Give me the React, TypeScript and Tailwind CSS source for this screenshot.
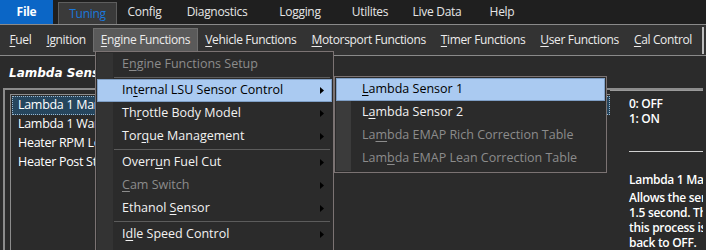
const tabs = [
  { label: "Config", w: "w-[55px]" },
  { label: "Diagnostics", w: "w-[90px]" },
  { label: "Logging", w: "w-[76px]" },
  { label: "Utilites", w: "w-[64px]" },
  { label: "Live Data", w: "w-[70px]" },
  { label: "Help", w: "w-[60px]" },
];

const toolItems = [
  { key: "F", rest: "uel" },
  { key: "I", rest: "gnition" },
  { key: "E", rest: "ngine Functions", active: true },
  { key: "V", rest: "ehicle Functions" },
  { key: "M", rest: "otorsport Functions" },
  { key: "T", rest: "imer Functions" },
  { key: "U", rest: "ser Functions" },
  { key: "C", rest: "al Control" },
];

type MenuItem =
  | { sep: true }
  | { pre: string; key: string; post: string; disabled?: boolean; arrow?: boolean; active?: boolean };

const engineMenu: MenuItem[] = [
  { pre: "E", key: "n", post: "gine Functions Setup", disabled: true },
  { sep: true },
  { pre: "In", key: "t", post: "ernal LSU Sensor Control", arrow: true, active: true },
  { pre: "Th", key: "r", post: "ottle Body Model", arrow: true },
  { pre: "Tor", key: "q", post: "ue Management", arrow: true },
  { sep: true },
  { pre: "Overr", key: "u", post: "n Fuel Cut", arrow: true },
  { pre: "", key: "C", post: "am Switch", disabled: true, arrow: true },
  { pre: "Ethanol ", key: "S", post: "ensor", arrow: true },
  { sep: true },
  { pre: "I", key: "d", post: "le Speed Control", arrow: true },
];

const lsuMenu: MenuItem[] = [
  { pre: "", key: "L", post: "ambda Sensor 1", active: true },
  { pre: "L", key: "a", post: "mbda Sensor 2" },
  { pre: "La", key: "m", post: "bda EMAP Rich Correction Table", disabled: true },
  { pre: "Lam", key: "b", post: "da EMAP Lean Correction Table", disabled: true },
];

const listRows = ["Lambda 1 Manual Control", "Lambda 1 Warm Up", "Heater RPM Lockout", "Heater Post Start Delay"];

function Arrow() {
  return (
    <svg width="4" height="7" viewBox="0 0 4 7" className="fill-black">
      <path d="M0 0 L4 3.5 L0 7 Z" />
    </svg>
  );
}

function MenuRows({ items, textPad }: { items: MenuItem[]; textPad: string }) {
  return (
    <>
      {items.map((it, i) =>
        "sep" in it ? (
          <div key={i} className="h-[3px] flex items-center pl-[18px] pr-[3px]">
            <div className="h-px w-full bg-[#5c5c5c]" />
          </div>
        ) : (
          <div
            key={i}
            className={`h-[23px] flex items-center justify-between pr-[7px] mx-px border ${textPad} ${
              it.active ? "bg-[#aacaf1] border-[#7f9fc6] text-black" : "border-transparent"
            } ${it.disabled ? "text-[#8c8c8c]" : it.active ? "" : "text-[#f2f2f2]"}`}
          >
            <span className="whitespace-nowrap">
              {it.pre}
              <span className="underline underline-offset-2">{it.key}</span>
              {it.post}
            </span>
            {it.arrow && <Arrow />}
          </div>
        )
      )}
    </>
  );
}

export default function App() {
  return (
    <div
      className="relative w-[706px] h-[250px] overflow-hidden bg-[#2b2b2b] text-white"
      style={{ fontFamily: '"Open Sans", "Noto Sans", sans-serif' }}
    >
      {/* top tabs */}
      <div className="h-[24px] flex items-end bg-[#1f1f1f] text-[12px] tracking-[-0.3px] border-b border-[#8a8a8a] box-content">
        <div className="w-[53px] h-[24px] bg-[#0b66c6] flex items-center justify-center font-bold text-white">File</div>
        <div className="ml-[5px] w-[59px] h-[22px] bg-[#3a3a3a] border border-b-0 border-[#5e5e5e] flex items-center justify-center text-[#1b78dc]">
          Tuning
        </div>
        {tabs.map((t) => (
          <div key={t.label} className={`${t.w} shrink-0 h-[24px] flex items-center justify-center text-[#e6e6e6]`}>
            {t.label}
          </div>
        ))}
      </div>

      {/* toolbar */}
      <div className="h-[31px] flex items-center bg-[#333333] border-b border-[#8a8a8a] pl-[2px] text-[12px] tracking-[-0.35px] text-[#ececec]">
        {toolItems.map((t) => (
          <div
            key={t.rest}
            className={`h-[24px] px-[6.5px] flex items-center whitespace-nowrap border ${
              t.active ? "bg-[#5a5a5a] border-[#6e6e6e]" : "border-transparent"
            }`}
          >
            <span className="underline underline-offset-2">{t.key}</span>
            {t.rest}
          </div>
        ))}
        <div className="ml-auto mr-[2px] w-[2px] h-[27px] bg-[#bdbdbd]" />
      </div>

      {/* body */}
      <div className="px-[3px] pt-[8px]">
        <div
          className="pl-[6px] h-[22px] text-[12px] font-bold italic text-white whitespace-nowrap"
          style={{ fontFamily: '"DejaVu Sans", sans-serif' }}
        >
          Lambda Sensor 1
        </div>
        <div className="mt-[2px] h-[170px] border-t-2 border-l-2 border-[#8c8c8c] flex">
          <div className="shrink-0 mt-[4px] ml-[5px] w-[600px] border-t border-l border-[#8c8c8c] pt-[1px] pl-px text-[12.5px] tracking-[-0.3px]">
            {listRows.map((r, i) => (
              <div
                key={r}
                className={`h-[19px] flex items-center pl-[5px] whitespace-nowrap border ${
                  i === 0 ? "bg-[#26465e] border-dotted border-[#9ab8d0]" : "border-transparent"
                }`}
              >
                {r}
              </div>
            ))}
          </div>
          <div className="flex-1 min-w-0 overflow-hidden border-t border-[#9a9a9a] pl-[19px] pt-[5px] text-[12px] tracking-[-0.3px] font-semibold leading-[15px] whitespace-nowrap">
            <div>0: OFF</div>
            <div>1: ON</div>
            <div className="mt-[25px] h-px bg-[#d0d0d0]" />
            <div className="mt-[20px]">Lambda 1 Manual Control</div>
            <div className="mt-[3px]">Allows the sensor heater</div>
            <div>1.5 second. The heater</div>
            <div>this process is complete</div>
            <div>back to OFF.</div>
          </div>
        </div>
      </div>

      {/* Engine Functions dropdown */}
      <div className="absolute left-[95px] top-[51px] w-[239px] h-[210px] bg-[#2b2b2b] border border-[#7b7373] text-[12.5px] pt-px">
        <div className="absolute left-px top-px bottom-0 w-[16px] bg-[#333333]" />
        <div className="relative">
          <MenuRows items={engineMenu} textPad="pl-[24px]" />
        </div>
      </div>

      {/* Internal LSU submenu */}
      <div className="absolute left-[334px] top-[76px] w-[273px] h-[97px] bg-[#2b2b2b] border border-[#7b7373] text-[12.5px] pt-px">
        <div className="absolute left-px top-px bottom-px w-[15px] bg-[#3b3b3b]" />
        <div className="relative">
          <MenuRows items={lsuMenu} textPad="pl-[25px]" />
        </div>
      </div>
    </div>
  );
}
